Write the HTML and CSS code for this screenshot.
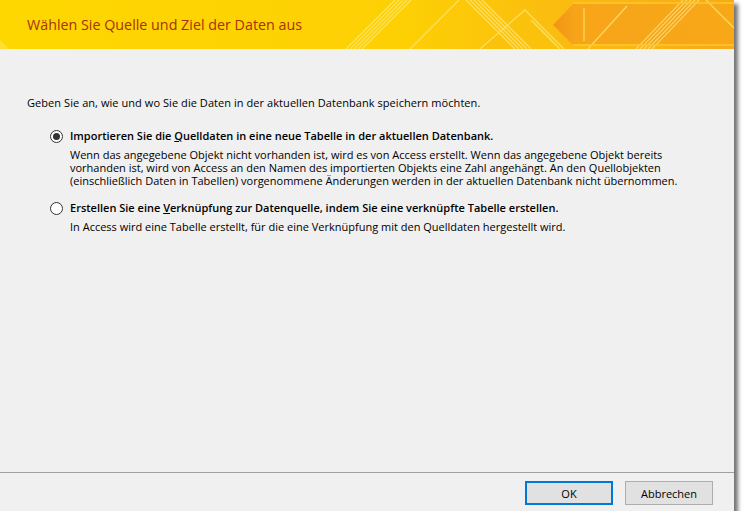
FILE: index.html
```html
<!DOCTYPE html>
<html>
<head>
    <meta charset="UTF-8">
    <title>Wählen Sie Quelle und Ziel der Daten aus</title>
    <link rel="stylesheet" href="styles.css">
</head>
<body>
    <div class="dialog">
        <!-- Kopfzeile mit gelbem Banner -->
        <div class="banner">
            <svg class="banner-art" width="734" height="49" viewBox="0 0 734 49">
                <defs>
                    <linearGradient id="bg" x1="0" y1="0" x2="1" y2="0">
                        <stop offset="0" stop-color="#fed700"/>
                        <stop offset="0.55" stop-color="#fdd004"/>
                        <stop offset="0.75" stop-color="#fbbd10"/>
                        <stop offset="1" stop-color="#f8aa18"/>
                    </linearGradient>
                    <linearGradient id="arrow" x1="0" y1="0" x2="1" y2="0">
                        <stop offset="0" stop-color="#f39214"/>
                        <stop offset="1" stop-color="#f6a21a"/>
                    </linearGradient>
                    <linearGradient id="band" x1="0" y1="0" x2="1" y2="0">
                        <stop offset="0" stop-color="#f7a419"/>
                        <stop offset="1" stop-color="#f8a817"/>
                    </linearGradient>
                </defs>
                <rect width="734" height="49" fill="url(#bg)"/>
                <polygon points="0,40 9,49 0,49" fill="#ffe45a" opacity="0.6"/>
                <polygon points="480,49 525,10 564,49" fill="#fbc20c"/>
                <polygon points="553,25 573,4 573,45" fill="url(#arrow)"/>
                <rect x="573" y="4" width="161" height="40" fill="url(#band)"/>
                <g stroke="#fff3a0" stroke-width="1.3" opacity="0.55">
                    <line x1="346" y1="49" x2="395" y2="0"/>
                    <line x1="350" y1="49" x2="399" y2="0"/>
                    <line x1="354" y1="49" x2="403" y2="0"/>
                    <line x1="358" y1="49" x2="407" y2="0"/>
                    <line x1="362" y1="49" x2="411" y2="0"/>
                    <line x1="466" y1="0" x2="515" y2="49"/>
                    <line x1="470" y1="0" x2="519" y2="49"/>
                    <line x1="474" y1="0" x2="523" y2="49"/>
                    <line x1="478" y1="0" x2="527" y2="49"/>
                    <line x1="482" y1="0" x2="531" y2="49"/>
                    <line x1="531" y1="20" x2="560" y2="49"/>
                    <line x1="535" y1="24" x2="556" y2="45"/>
                    <line x1="636" y1="49" x2="683" y2="0"/>
                    <line x1="640" y1="49" x2="687" y2="0"/>
                    <line x1="644" y1="49" x2="691" y2="0"/>
                    <line x1="648" y1="49" x2="695" y2="0"/>
                    <line x1="652" y1="49" x2="699" y2="0"/>
                </g>
                <g stroke="#ffe36a" stroke-width="1.3" fill="none" opacity="0.85">
                    <line x1="410" y1="49" x2="459" y2="0"/>
                    <polyline points="480,49 525,10 564,49"/>
                    <line x1="584" y1="8" x2="584" y2="41"/>
                    <line x1="588" y1="49" x2="627" y2="6"/>
                    <line x1="706" y1="0" x2="734" y2="28"/>
                </g>
                <g stroke="#fdc72a" stroke-width="2" opacity="0.8">
                    <line x1="573" y1="3" x2="734" y2="3"/>
                    <line x1="573" y1="45" x2="734" y2="45"/>
                </g>
            </svg>
            <h1 class="title">Wählen Sie Quelle und Ziel der Daten aus</h1>
        </div>

        <!-- Inhalt -->
        <div class="content">
            <p class="intro">Geben Sie an, wie und wo Sie die Daten in der aktuellen Datenbank speichern möchten.</p>

            <div class="option">
                <span class="radio checked"></span>
                <div class="option-text">
                    <div class="option-label">Importieren Sie die <u>Q</u>uelldaten in eine neue Tabelle in der aktuellen Datenbank.</div>
                    <div class="option-desc">Wenn das angegebene Objekt nicht vorhanden ist, wird es von Access erstellt. Wenn das angegebene Objekt bereits<br>vorhanden ist, wird von Access an den Namen des importierten Objekts eine Zahl angehängt. An den Quellobjekten<br>(einschließlich Daten in Tabellen) vorgenommene Änderungen werden in der aktuellen Datenbank nicht übernommen.</div>
                </div>
            </div>

            <div class="option">
                <span class="radio"></span>
                <div class="option-text">
                    <div class="option-label">Erstellen Sie eine <u>V</u>erknüpfung zur Datenquelle, indem Sie eine verknüpfte Tabelle erstellen.</div>
                    <div class="option-desc">In Access wird eine Tabelle erstellt, für die eine Verknüpfung mit den Quelldaten hergestellt wird.</div>
                </div>
            </div>
        </div>

        <!-- Schaltflächen -->
        <div class="footer">
            <button class="btn btn-default">OK</button>
            <button class="btn">Abbrechen</button>
        </div>
    </div>
</body>
</html>
```

FILE: styles.css
```css
/* Dialog im Stil von Access */
body {
    margin: 0;
    padding: 0;
    background: #fff;
    font-family: "Open Sans", "Noto Sans", sans-serif;
}

.dialog {
    width: 734px;
    height: 511px;
    background: #f0f0f0;
    box-shadow: 4px 4px 4px rgba(0,0,0,0.55);
    display: flex;
    flex-direction: column;
}

.banner {
    position: relative;
    height: 49px;
    flex-shrink: 0;
}

.banner-art {
    position: absolute;
    top: 0;
    left: 0;
}

.title {
    position: relative;
    margin: 0;
    padding-left: 27px;
    line-height: 50px;
    font-size: 14.3px;
    font-weight: normal;
    color: #a8300a;
}

.content {
    flex: 1;
    padding: 47px 27px 0;
    font-size: 11px;
    color: #000;
}

.intro {
    margin: 0 0 19px;
    line-height: 14px;
    letter-spacing: 0.06px;
}

.option {
    display: flex;
    align-items: flex-start;
    margin-left: 23px;
    margin-bottom: 14px;
}

.radio {
    width: 11px;
    height: 11px;
    border: 1px solid #333;
    border-radius: 50%;
    background: #fff;
    margin-top: 1px;
    margin-right: 7px;
    position: relative;
    flex-shrink: 0;
}

.radio.checked::after { /* Punkt für ausgewählte Option */
    content: "";
    position: absolute;
    width: 7px;
    height: 7px;
    border-radius: 50%;
    background: #333;
    top: 2px;
    left: 2px;
}

.option-label {
    font-weight: 600;
    line-height: 14px;
    margin-bottom: 5px;
}

.option-desc {
    line-height: 13px;
}

.footer {
    height: 39px;
    border-top: 1px solid #a0a0a0;
    display: flex;
    justify-content: flex-end;
    align-items: flex-start;
    gap: 12px;
    padding: 8px 21px 0 0;
    box-sizing: border-box;
    flex-shrink: 0;
}

.btn {
    width: 88px;
    height: 24px;
    background: #e1e1e1;
    border: 1px solid #adadad;
    font-family: "Open Sans", "Noto Sans", sans-serif;
    font-size: 11px;
    color: #000;
    padding: 0;
}

.btn-default {
    border: 2px solid #0078d7;
}
```
